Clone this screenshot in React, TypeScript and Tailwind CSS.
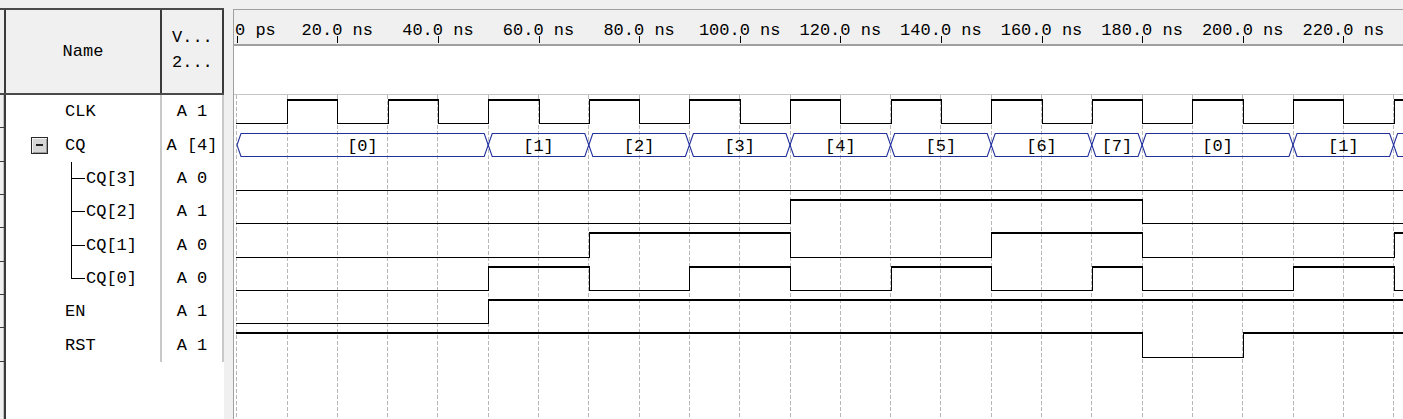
import React from "react";

const X = (t: number) => 236.7 + 5.03 * t;
const px = (t: number) => Math.round(X(t));

type Row = { name: string; val: string; h: number; child?: boolean; last?: boolean; exp?: boolean };

const rows: Row[] = [
  { name: "CLK", val: "A 1", h: 33 },
  { name: "CQ", val: "A [4]", h: 34, exp: true },
  { name: "CQ[3]", val: "A 0", h: 33, child: true },
  { name: "CQ[2]", val: "A 1", h: 33, child: true },
  { name: "CQ[1]", val: "A 0", h: 34, child: true },
  { name: "CQ[0]", val: "A 0", h: 33, child: true, last: true },
  { name: "EN", val: "A 1", h: 33 },
  { name: "RST", val: "A 1", h: 34 },
];

const tops = [95, 128, 162, 195, 228, 262, 295, 328, 362];

function Digital({ top, bottom, init, toggles }: { top: number; bottom: number; init: number; toggles: number[] }) {
  const hi = top + 5;
  const lo = bottom - 5 + 0.5;
  const times = [0, ...toggles, 240];
  const els: React.ReactNode[] = [];
  let v = init;
  for (let i = 0; i < times.length - 1; i++) {
    const x1 = i === 0 ? 236 : px(times[i]);
    const x2 = px(times[i + 1]);
    const y = v ? hi : lo;
    els.push(<line key={"h" + i} x1={x1} x2={x2 + 1} y1={y} y2={y} strokeWidth={v ? 2 : 1} stroke="#000" />);
    if (i < times.length - 2) {
      els.push(<line key={"v" + i} x1={x2 + 0.5} x2={x2 + 0.5} y1={hi - 1} y2={lo + 0.5} strokeWidth={1.2} stroke="#000" />);
    }
    v = 1 - v;
  }
  return <g shapeRendering="crispEdges">{els}</g>;
}

const busSegs: [number, number, string][] = [
  [0, 50, "[0]"],
  [50, 70, "[1]"],
  [70, 90, "[2]"],
  [90, 110, "[3]"],
  [110, 130, "[4]"],
  [130, 150, "[5]"],
  [150, 170, "[6]"],
  [170, 180, "[7]"],
  [180, 210, "[0]"],
  [210, 230, "[1]"],
  [230, 260, ""],
];

function Bus() {
  const t = 133.5, b = 156.5, m = 145, d = 4;
  return (
    <g>
      {busSegs.map(([a, c, label], i) => {
        const xa = i === 0 ? 237 : X(a);
        const xb = X(c);
        return (
          <g key={i}>
            <path
              d={`M${xa},${m} L${xa + d},${t} L${xb - d},${t} L${xb},${m} L${xb - d},${b} L${xa + d},${b} Z`}
              fill="none"
              stroke="#22309c"
              strokeWidth={1.1}
            />
            {label && (
              <text x={(X(a) + xb) / 2} y={151} textAnchor="middle" fill="#000">
                {label}
              </text>
            )}
          </g>
        );
      })}
    </g>
  );
}

function TimeHeader() {
  const labels: React.ReactNode[] = [];
  for (let t = 20; t <= 220; t += 20) {
    labels.push(
      <text key={t} x={X(t)} y={35} textAnchor="middle" fill="#000">
        {`${t}.0 ns`}
      </text>
    );
  }
  const ticks: React.ReactNode[] = [];
  for (let t = 0; t <= 230; t += 20) {
    ticks.push(<line key={t} x1={px(t) + 0.5} x2={px(t) + 0.5} y1={36} y2={43} stroke="#000" strokeWidth={1} />);
  }
  return (
    <svg width={1169} height={34} className="block">
      <g transform="translate(-234,-10)">
        <text x={235} y={35} fill="#000">0 ps</text>
        {labels}
        <g shapeRendering="crispEdges">{ticks}</g>
      </g>
    </svg>
  );
}

function WaveBody() {
  const grid: React.ReactNode[] = [];
  for (let t = 0; t <= 240; t += 10) {
    const x = Math.floor(X(t)) + 0.5;
    grid.push(<line key={t} x1={x} x2={x} y1={95} y2={419} stroke="#b8b8b8" strokeWidth={1} strokeDasharray="4 2" />);
  }
  const clk: number[] = [];
  for (let t = 10; t <= 230; t += 10) clk.push(t);
  return (
    <svg width={1169} height={373} className="block">
      <g transform="translate(-234,-46)">
        <line x1={234} x2={1403} y1={94.5} y2={94.5} stroke="#c4c4c4" strokeWidth={1} shapeRendering="crispEdges" />
        <g shapeRendering="crispEdges">{grid}</g>
        <Digital top={tops[0]} bottom={tops[1]} init={0} toggles={clk} />
        <Bus />
        <Digital top={tops[2]} bottom={tops[3]} init={0} toggles={[]} />
        <Digital top={tops[3]} bottom={tops[4]} init={0} toggles={[110, 180]} />
        <Digital top={tops[4]} bottom={tops[5]} init={0} toggles={[70, 110, 150, 180, 230]} />
        <Digital top={tops[5]} bottom={tops[6]} init={0} toggles={[50, 70, 90, 110, 130, 150, 170, 180, 210, 230]} />
        <Digital top={tops[6]} bottom={tops[7]} init={0} toggles={[50]} />
        <Digital top={tops[7]} bottom={tops[8]} init={1} toggles={[180, 200]} />
      </g>
    </svg>
  );
}

function Expander() {
  return (
    <div className="w-[17px] h-[17px] border border-[#2a2a2a] bg-[#d6d6d6] shadow-[inset_1px_1px_0_#f4f4f4,inset_-1px_-1px_0_#9a9a9a] flex items-center justify-center">
      <div className="w-[7px] h-[2px] bg-[#222]" />
    </div>
  );
}

function NameCell({ r }: { r: Row }) {
  if (r.child) {
    return (
      <div className="w-[154px] h-full flex items-center">
        <div className="w-[65px] shrink-0" />
        <div className="w-[14px] h-full flex flex-col shrink-0">
          <div className="flex-1 border-l border-b border-black" />
          <div className={"flex-1 " + (r.last ? "" : "border-l border-black")} />
        </div>
        <span className="ml-[1px]">{r.name}</span>
      </div>
    );
  }
  return (
    <div className="w-[154px] h-full flex items-center">
      {r.exp ? (
        <>
          <div className="w-[25px] shrink-0" />
          <Expander />
          <div className="w-[17px] shrink-0" />
        </>
      ) : (
        <div className="w-[59px] shrink-0" />
      )}
      <span>{r.name}</span>
    </div>
  );
}

export default function App() {
  return (
    <div className="w-[1403px] h-[419px] bg-[#f0f0f0] flex overflow-hidden font-['Liberation_Mono',monospace] text-[17px] leading-none text-black">
      {/* left panel */}
      <div className="w-[224px] shrink-0 flex flex-col">
        <div className="h-[8px] shrink-0" />
        <div className="h-[87px] shrink-0 flex border-t-2 border-b-2 border-[#4a4a4a]">
          <div className="w-[4px] bg-[#f0f0f0]" />
          <div className="w-[2px] bg-[#3a3a3a]" />
          <div className="w-[154px] bg-[#f0f0f0] flex items-center justify-center pb-[1px]">Name</div>
          <div className="w-[2px] bg-[#3a3a3a]" />
          <div className="w-[60px] bg-[#f0f0f0] flex flex-col justify-center pl-[10px] gap-[8px] pb-[3px]">
            <span>V...</span>
            <span>2...</span>
          </div>
          <div className="w-[2px] bg-[#3a3a3a]" />
        </div>
        <div className="flex-1 flex flex-col">
          {rows.map((r, i) => (
            <div key={i} className="flex" style={{ height: r.h }}>
              <div className="w-[4px] bg-[#f0f0f0] border-b border-[#3a3a3a] shadow-[inset_-1px_0_0_#c0c0c0]" />
              <div className="w-[2px] bg-[#3a3a3a]" />
              <div className="bg-white flex">
                <NameCell r={r} />
                <div className="w-[2px] bg-[#c8c8c8]" />
                <div className="w-[60px] flex items-center justify-center">{r.val}</div>
                <div className="w-[2px] bg-[#c8c8c8]" />
              </div>
            </div>
          ))}
          <div className="flex-1 flex">
            <div className="w-[4px] bg-[#f0f0f0] shadow-[inset_-1px_0_0_#c0c0c0]" />
            <div className="w-[2px] bg-[#3a3a3a]" />
            <div className="flex-1 bg-white" />
          </div>
        </div>
      </div>
      {/* splitter */}
      <div className="w-[9px] shrink-0" />
      {/* waveform panel */}
      <div className="flex-1 mt-[9px] flex flex-col border-l border-t border-[#a0a0a0]">
        <div className="h-[36px] shrink-0 bg-[#f0f0f0] border-b-2 border-[#a0a0a0] overflow-hidden">
          <TimeHeader />
        </div>
        <div className="flex-1 bg-white overflow-hidden">
          <WaveBody />
        </div>
      </div>
    </div>
  );
}
